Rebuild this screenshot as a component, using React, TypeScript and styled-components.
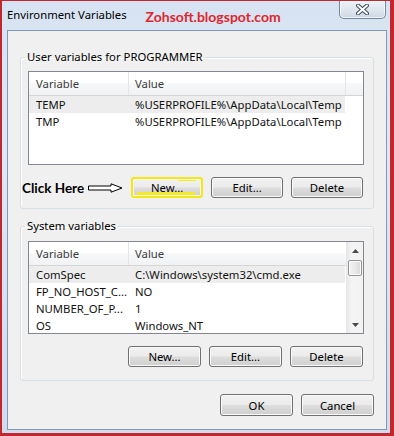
import React from "react";
import styled, { createGlobalStyle, css } from "styled-components";

const UI_SIZE = "11.3px";

const GlobalStyle = createGlobalStyle`
  html, body { margin: 0; padding: 0; }
  body { font-family: "Noto Sans", "Open Sans", sans-serif; font-size: ${UI_SIZE}; color: #000; }
  * { box-sizing: border-box; }
`;

const Window = styled.div`
  width: 394px;
  height: 436px;
  display: flex;
  flex-direction: column;
  border-style: solid;
  border-color: #c3262e;
  border-width: 1px 4px 3px 2px;
  background: linear-gradient(180deg, #d7e3f2 0%, #dfe8f4 35%, #d0dcec 100%);
`;

const TitleBar = styled.div`
  height: 29px;
  flex: none;
  display: flex;
  align-items: flex-start;
  padding: 0 4px 0 5px;
`;

const Title = styled.div`
  margin-top: 6px;
  font-size: ${UI_SIZE};
  line-height: 16px;
  color: #000;
  white-space: nowrap;
`;

const Watermark = styled.div`
  margin: 7px 0 0 19px;
  font-family: "Lato", "Open Sans", sans-serif;
  font-weight: 700;
  font-size: 14px;
  line-height: 18px;
  color: #e0262d;
  white-space: nowrap;
`;

const CloseButton = styled.div`
  margin-left: auto;
  width: 47px;
  height: 18px;
  border: 1px solid #7486a0;
  border-top: none;
  border-radius: 0 0 5px 5px;
  background: linear-gradient(180deg, #eef2f7 0%, #dfe6ef 50%, #cdd7e4 100%);
  box-shadow: inset 0 0 0 1px rgba(255, 255, 255, 0.7);
  display: flex;
  align-items: center;
  justify-content: center;
`;

const Client = styled.div`
  flex: 1;
  margin: 0 3px 3px 5px;
  border: 1px solid #8598b3;
  background: #f0f0f0;
  padding: 18px 12px 0 12px;
  display: flex;
  flex-direction: column;
`;

const GroupBox = styled.fieldset<{ $padTop: number; $padBottom: number; $mt: number }>`
  margin: ${(p) => p.$mt}px 0 0 0;
  min-width: 0;
  border: 1px solid #d5dfe5;
  border-radius: 3px;
  padding: ${(p) => p.$padTop}px 9px ${(p) => p.$padBottom}px 7px;
  box-shadow: inset 1px 1px 0 #fff;
`;

const Legend = styled.legend`
  padding: 0 2px;
  margin-left: -3px;
  font-size: ${UI_SIZE};
  line-height: 16px;
  color: #000;
`;

const ListView = styled.div<{ $h: number }>`
  height: ${(p) => p.$h}px;
  border: 1px solid #828790;
  background: #fff;
  display: flex;
  overflow: hidden;
`;

const ListMain = styled.div`
  flex: 1;
  min-width: 0;
  display: flex;
  flex-direction: column;
`;

const Header = styled.div<{ $cols: string }>`
  height: 24px;
  flex: none;
  display: grid;
  grid-template-columns: ${(p) => p.$cols};
  border-bottom: 1px solid #d5d5d5;
  background: linear-gradient(180deg, #ffffff 0%, #ffffff 50%, #f7f8fa 50%, #f1f2f4 100%);
`;

const HeaderCell = styled.div<{ $pad: number; $last?: boolean }>`
  padding-left: ${(p) => p.$pad}px;
  line-height: 23px;
  font-size: ${UI_SIZE};
  color: #3c3c3c;
  border-right: ${(p) => (p.$last ? "none" : "1px solid #e3e5e8")};
  white-space: nowrap;
`;

const Row = styled.div<{ $selected?: boolean; $width: number }>`
  width: ${(p) => p.$width}px;
  height: 17px;
  flex: none;
  display: grid;
  grid-template-columns: 100px 1fr;
  background: ${(p) => (p.$selected ? "#ededed" : "transparent")};
`;

const Cell = styled.div<{ $pad: number }>`
  padding-left: ${(p) => p.$pad}px;
  line-height: 17px;
  font-size: ${UI_SIZE};
  color: #111;
  white-space: nowrap;
`;

const ScrollBar = styled.div`
  width: 17px;
  flex: none;
  display: flex;
  flex-direction: column;
  border-left: 1px solid #e6e6e6;
  background: linear-gradient(90deg, #e9e9e9 0%, #f4f4f4 30%, #f2f2f2 100%);
`;

const ScrollArrow = styled.div`
  height: 17px;
  flex: none;
  display: flex;
  align-items: center;
  justify-content: center;
`;

const Thumb = styled.div`
  height: 16px;
  margin: 1px 1px 0 1px;
  flex: none;
  border: 1px solid #959595;
  border-radius: 2px;
  background: linear-gradient(90deg, #f3f3f3 0%, #e9e9e9 50%, #d9d9d9 100%);
  box-shadow: inset 0 0 0 1px #fafafa;
`;

const ScrollSpacer = styled.div`
  flex: 1;
`;

const ButtonRow = styled.div<{ $mt: number }>`
  margin-top: ${(p) => p.$mt}px;
  display: flex;
  align-items: center;
  justify-content: flex-end;
  gap: 8px;
  padding-right: 1px;
`;

const Pointer = styled.div`
  margin-right: auto;
  margin-left: -6px;
  display: flex;
  align-items: center;
  gap: 4px;
`;

const ClickHere = styled.span`
  font-family: "Lato", "Open Sans", sans-serif;
  font-weight: 700;
  font-size: 13.5px;
  line-height: 18px;
  color: #000;
  white-space: nowrap;
`;

const buttonFace = css`
  border: 1px solid #707070;
  border-radius: 3px;
  background: linear-gradient(180deg, #f2f2f2 0%, #ebebeb 48%, #dddddd 52%, #cfcfcf 100%);
  box-shadow: inset 0 0 0 1px #fbfbfb;
`;

const Button = styled.div<{ $marked?: boolean; $h?: number }>`
  position: relative;
  width: 73px;
  height: ${(p) => p.$h ?? 21}px;
  ${buttonFace};
  display: flex;
  align-items: center;
  justify-content: center;
  font-size: ${UI_SIZE};
  color: #000;
  ${(p) =>
    p.$marked &&
    css`
      border: 2px solid #f3e61a;
      box-shadow: inset 0 0 0 1px #fffde0;
      &::before {
        content: "";
        position: absolute;
        left: 4px;
        right: 6px;
        bottom: 1px;
        height: 3px;
        background: #f5ea2a;
      }
      &::after {
        content: "";
        position: absolute;
        left: 45px;
        width: 18px;
        top: 1px;
        height: 1px;
        background: #f5ea2a;
      }
    `}
`;

const DialogFooter = styled.div`
  margin-top: 13px;
  display: flex;
  justify-content: flex-end;
  gap: 8px;
`;

type Item = { name: string; value: string; selected?: boolean };

const userVars: Item[] = [
  { name: "TEMP", value: "%USERPROFILE%\\AppData\\Local\\Temp", selected: true },
  { name: "TMP", value: "%USERPROFILE%\\AppData\\Local\\Temp" },
];

const sysVars: Item[] = [
  { name: "ComSpec", value: "C:\\Windows\\system32\\cmd.exe", selected: true },
  { name: "FP_NO_HOST_C...", value: "NO" },
  { name: "NUMBER_OF_P...", value: "1" },
  { name: "OS", value: "Windows_NT" },
];

const CloseGlyph = () => (
  <svg width="13" height="11" viewBox="0 0 13 11">
    <path d="M2 1.5 L11 9.5 M11 1.5 L2 9.5" stroke="#3d4a5c" strokeWidth="4" strokeLinecap="round" />
    <path d="M2 1.5 L11 9.5 M11 1.5 L2 9.5" stroke="#ffffff" strokeWidth="2" strokeLinecap="round" />
  </svg>
);

const HollowArrow = () => (
  <svg width="35" height="10" viewBox="0 0 35 10">
    <path d="M0.5 3 H23 V0.8 L34 5 L23 9.2 V7 H0.5 Z" fill="#fff" stroke="#000" strokeWidth="1" />
  </svg>
);

const UpTri = () => (
  <svg width="7" height="4" viewBox="0 0 7 4">
    <path d="M0 4 L3.5 0 L7 4 Z" fill="#4a4a4a" />
  </svg>
);

const DownTri = () => (
  <svg width="7" height="4" viewBox="0 0 7 4">
    <path d="M0 0 L3.5 4 L7 0 Z" fill="#4a4a4a" />
  </svg>
);

export default function App() {
  return (
    <>
      <GlobalStyle />
      <Window>
        <TitleBar>
          <Title>Environment Variables</Title>
          <Watermark>Zohsoft.blogspot.com</Watermark>
          <CloseButton>
            <CloseGlyph />
          </CloseButton>
        </TitleBar>
        <Client>
          <GroupBox $padTop={6} $padBottom={10} $mt={0}>
            <Legend>User variables for PROGRAMMER</Legend>
            <ListView $h={94}>
              <ListMain>
                <Header $cols="100px 217px 1fr">
                  <HeaderCell $pad={7}>Variable</HeaderCell>
                  <HeaderCell $pad={6}>Value</HeaderCell>
                  <HeaderCell $pad={0} $last />
                </Header>
                {userVars.map((v) => (
                  <Row key={v.name} $selected={v.selected} $width={316}>
                    <Cell $pad={7}>{v.name}</Cell>
                    <Cell $pad={6}>{v.value}</Cell>
                  </Row>
                ))}
              </ListMain>
            </ListView>
            <ButtonRow $mt={12}>
              <Pointer>
                <ClickHere>Click Here</ClickHere>
                <HollowArrow />
              </Pointer>
              <Button $marked>New...</Button>
              <Button>Edit...</Button>
              <Button>Delete</Button>
            </ButtonRow>
          </GroupBox>
          <GroupBox $padTop={7} $padBottom={13} $mt={9}>
            <Legend>System variables</Legend>
            <ListView $h={93}>
              <ListMain>
                <Header $cols="100px 1fr">
                  <HeaderCell $pad={7}>Variable</HeaderCell>
                  <HeaderCell $pad={6} $last>
                    Value
                  </HeaderCell>
                </Header>
                {sysVars.map((v) => (
                  <Row key={v.name} $selected={v.selected} $width={316}>
                    <Cell $pad={7}>{v.name}</Cell>
                    <Cell $pad={6}>{v.value}</Cell>
                  </Row>
                ))}
              </ListMain>
              <ScrollBar>
                <ScrollArrow>
                  <UpTri />
                </ScrollArrow>
                <Thumb />
                <ScrollSpacer />
                <ScrollArrow>
                  <DownTri />
                </ScrollArrow>
              </ScrollBar>
            </ListView>
            <ButtonRow $mt={12}>
              <Button>New...</Button>
              <Button>Edit...</Button>
              <Button>Delete</Button>
            </ButtonRow>
          </GroupBox>
          <DialogFooter>
            <Button $h={22}>OK</Button>
            <Button $h={22}>Cancel</Button>
          </DialogFooter>
        </Client>
      </Window>
    </>
  );
}
